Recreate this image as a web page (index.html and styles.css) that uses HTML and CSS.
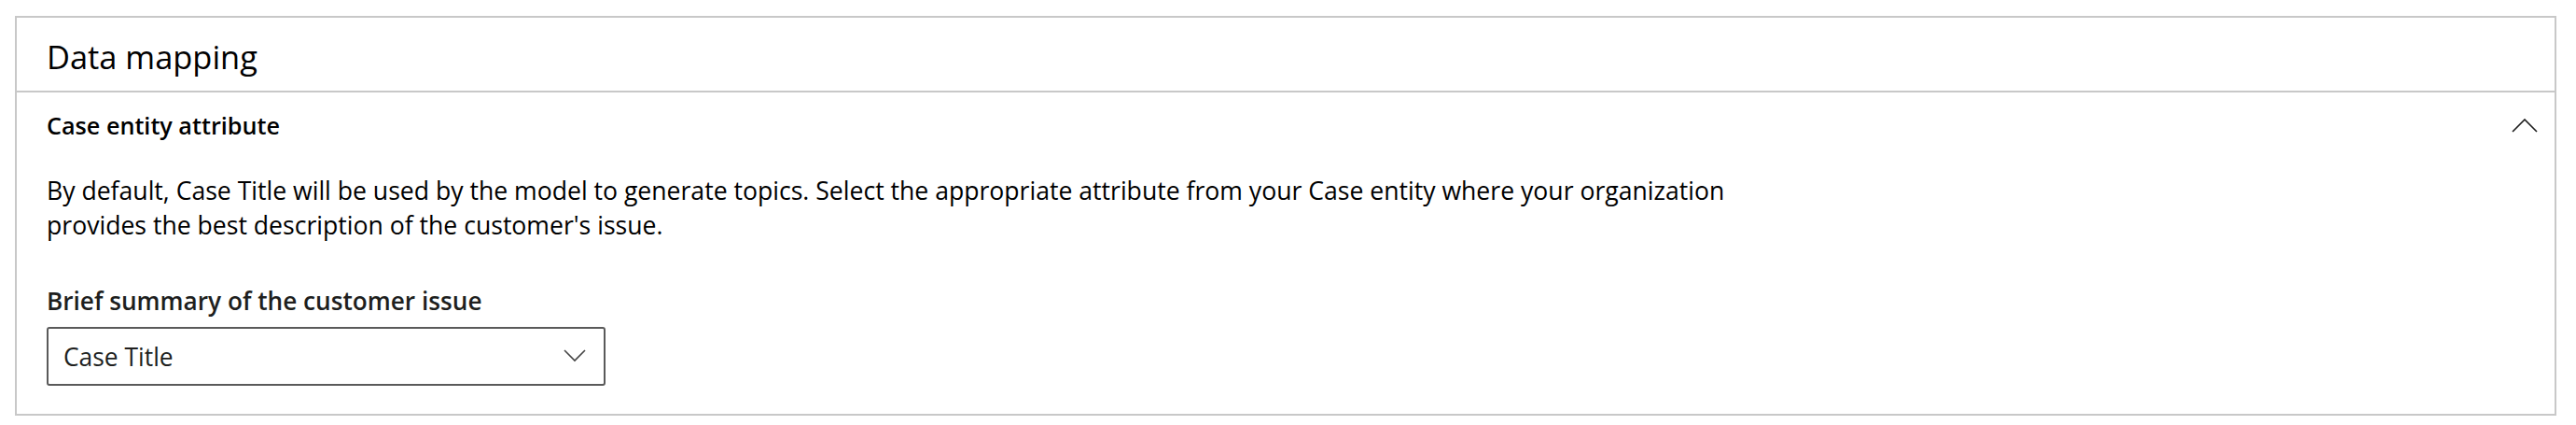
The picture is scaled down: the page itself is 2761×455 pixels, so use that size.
FILE: index.html
```html
<!DOCTYPE html>
<html lang="en">
<head>
<meta charset="utf-8">
<title>Data mapping</title>
<link rel="stylesheet" href="styles.css">
</head>
<body>
<section class="card">
  <header class="card-header">
    <h1 class="card-title">Data mapping</h1>
  </header>
  <div class="section">
    <div class="section-head">
      <h2 class="section-title">Case entity attribute</h2>
      <svg class="chev-up" width="28" height="15" viewBox="0 0 28 15" aria-hidden="true">
        <path d="M1 14 L14 1 L27 14" fill="none" stroke="#1b1b1b" stroke-width="1.6"/>
      </svg>
    </div>
    <div class="section-body">
      <p class="desc">By default, Case Title will be used by the model to generate topics. Select the appropriate attribute from your Case entity where your organization<br>provides the best description of the customer's issue.</p>
      <label class="field-label">Brief summary of the customer issue</label>
      <div class="dropdown">
        <span class="dropdown-value">Case Title</span>
        <svg class="chev-down" width="24" height="14" viewBox="0 0 24 14" aria-hidden="true">
          <path d="M1 1 L12 12 L23 1" fill="none" stroke="#444" stroke-width="1.6"/>
        </svg>
      </div>
    </div>
  </div>
</section>
</body>
</html>
```
FILE: styles.css
```css
html, body {
  margin: 0;
  padding: 0;
  background: #ffffff;
}
body {
  font-family: "Segoe UI", "Open Sans", "Noto Sans", sans-serif;
  color: #000;
}
.card {
  margin: 17px 21px 0 16px;
  border: 2px solid #c8c8c8;
  height: 424px;
  box-sizing: content-box;
  display: flex;
  flex-direction: column;
}
.card-header {
  height: 80px;
  border-bottom: 2px solid #c8c8c8;
  display: flex;
  align-items: center;
  padding: 6px 0 0 32px;
  box-sizing: border-box;
}
.card-title {
  margin: 0;
  font-size: 34.4px;
  font-weight: 400;
  line-height: 42px;
}
.section-head {
  height: 70px;
  display: flex;
  align-items: center;
  justify-content: space-between;
  padding: 0 18px 0 32px;
}
.section-title {
  margin: 0;
  font-size: 25.2px;
  font-weight: 600;
  line-height: 32px;
}
.section-body {
  padding: 17px 32px 0 32px;
  display: flex;
  flex-direction: column;
  align-items: flex-start;
}
.desc {
  margin: 0;
  font-size: 26.6px;
  line-height: 37px;
}
.field-label {
  margin-top: 44px;
  font-size: 26.2px;
  font-weight: 600;
  line-height: 36px;
  color: #201f1e;
}
.dropdown {
  margin-top: 10px;
  width: 599px;
  height: 63px;
  box-sizing: border-box;
  border: 2px solid #5a5a5a;
  border-radius: 3px;
  display: flex;
  align-items: center;
  justify-content: space-between;
  padding: 0 19px 0 16px;
}
.dropdown-value {
  font-size: 26.4px;
  color: #201f1e;
}
.chev-down {
  margin-top: -2px;
}
```
